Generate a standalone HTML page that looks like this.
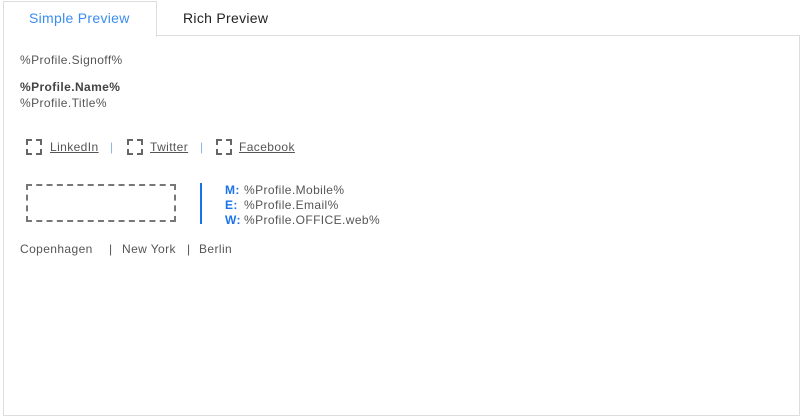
<!DOCTYPE html>
<html><head><style>
body{margin:0;width:804px;height:416px;background:#fff;font-family:"Liberation Sans",sans-serif;color:#555;position:relative;overflow:hidden}
.a{position:absolute;white-space:nowrap}
.t{font-size:12px;line-height:14px;letter-spacing:0.4px}
.ic{position:absolute;width:12px;height:12px;border:2px dashed #666;}
u{color:#555}
.sep{color:#8ab4e0}
b.l{color:#1a73e8}
</style></head><body>
<div class="a" style="left:3px;top:35px;width:795px;height:379px;border:1px solid #ddd"></div>
<div class="a" style="left:3px;top:1px;width:152px;height:35px;border:1px solid #ddd;border-bottom:none;background:#fff"></div>
<div class="a" style="left:29px;top:10px;font-size:14px;color:#3b8cf0;letter-spacing:0.3px">Simple Preview</div>
<div class="a" style="left:183px;top:10px;font-size:14px;color:#222;letter-spacing:0.3px">Rich Preview</div>
<div class="a t" style="left:20px;top:53px">%Profile.Signoff%</div>
<div class="a t" style="left:20px;top:80px;font-weight:bold;color:#444">%Profile.Name%</div>
<div class="a t" style="left:20px;top:96px">%Profile.Title%</div>
<div class="ic" style="left:26px;top:139px"></div>
<div class="a t" style="left:50px;top:140px"><u>LinkedIn</u></div>
<div class="a t sep" style="left:110px;top:140px">|</div>
<div class="ic" style="left:127px;top:139px"></div>
<div class="a t" style="left:150px;top:140px"><u>Twitter</u></div>
<div class="a t sep" style="left:200px;top:140px">|</div>
<div class="ic" style="left:216px;top:139px"></div>
<div class="a t" style="left:239px;top:140px"><u>Facebook</u></div>
<div class="a" style="left:26px;top:184px;width:146px;height:34px;border:2px dashed #777"></div>
<div class="a" style="left:200px;top:183px;width:2px;height:41px;background:#1a73e8"></div>
<div class="a t" style="left:225px;top:183px"><b class="l">M:</b></div>
<div class="a t" style="left:225px;top:198px"><b class="l">E:</b></div>
<div class="a t" style="left:225px;top:213px"><b class="l">W:</b></div>
<div class="a t" style="left:244px;top:183px">%Profile.Mobile%</div>
<div class="a t" style="left:244px;top:198px">%Profile.Email%</div>
<div class="a t" style="left:244px;top:213px">%Profile.OFFICE.web%</div>
<div class="a t" style="left:20px;top:242px">Copenhagen</div>
<div class="a t" style="left:109px;top:242px">|</div>
<div class="a t" style="left:122px;top:242px">New York</div>
<div class="a t" style="left:187px;top:242px">|</div>
<div class="a t" style="left:199px;top:242px">Berlin</div>
</body></html>
